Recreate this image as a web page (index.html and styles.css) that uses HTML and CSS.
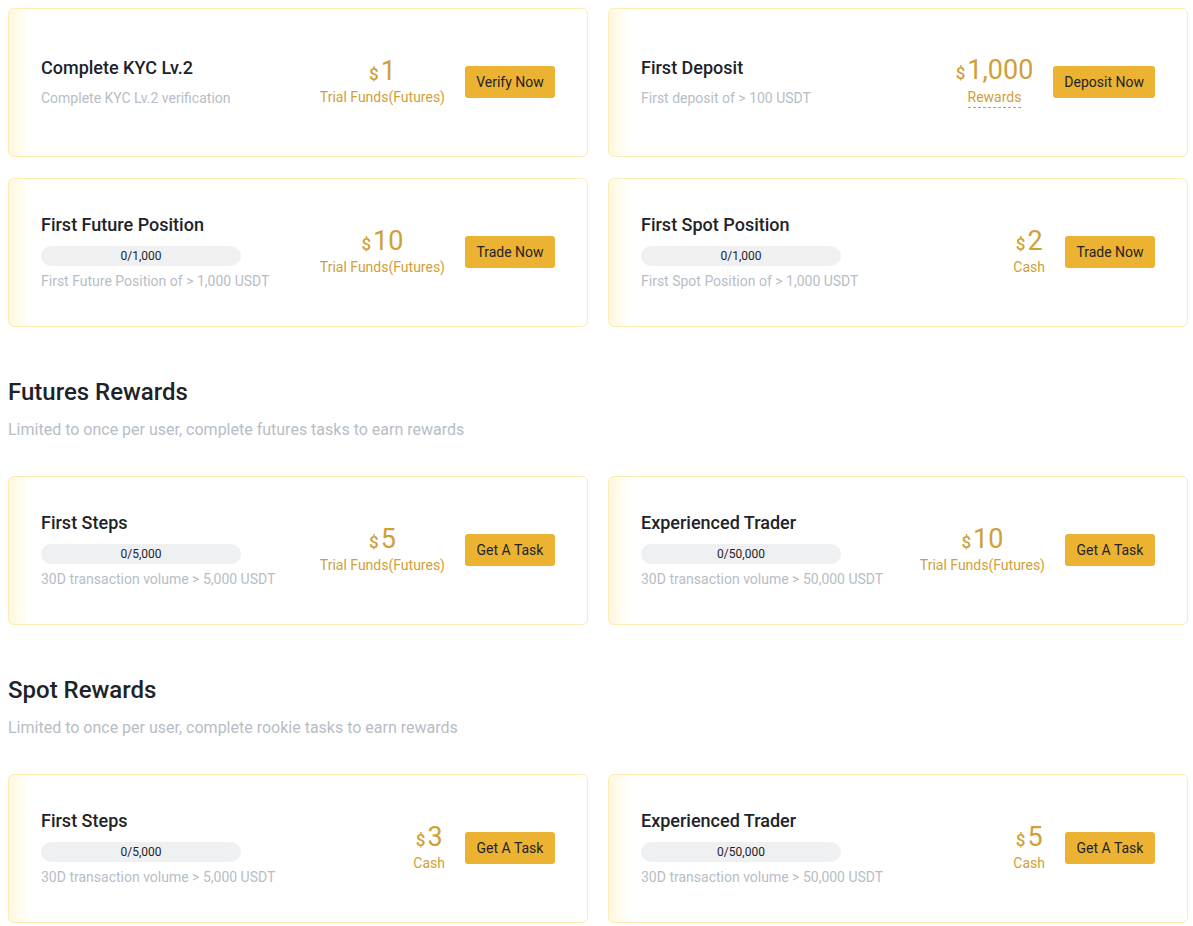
FILE: index.html
```html
<!DOCTYPE html>
<html>
<head>
<meta charset="utf-8">
<link rel="stylesheet" href="styles.css">
</head>
<body>
<div class="page">
  <div class="grid">
    <div class="card">
      <div class="info">
        <div class="title">Complete KYC Lv.2</div>
        <div class="desc">Complete KYC Lv.2 verification</div>
      </div>
      <div class="reward"><div class="amount"><span class="cur">$</span>1</div><div class="label">Trial Funds(Futures)</div></div>
      <button class="btn">Verify Now</button>
    </div>
    <div class="card">
      <div class="info">
        <div class="title">First Deposit</div>
        <div class="desc">First deposit of &gt; 100 USDT</div>
      </div>
      <div class="reward"><div class="amount"><span class="cur">$</span>1,000</div><div class="label dashed">Rewards</div></div>
      <button class="btn">Deposit Now</button>
    </div>
    <div class="card">
      <div class="info">
        <div class="title">First Future Position</div>
        <div class="bar">0/1,000</div>
        <div class="desc">First Future Position of &gt; 1,000 USDT</div>
      </div>
      <div class="reward"><div class="amount"><span class="cur">$</span>10</div><div class="label">Trial Funds(Futures)</div></div>
      <button class="btn">Trade Now</button>
    </div>
    <div class="card">
      <div class="info">
        <div class="title">First Spot Position</div>
        <div class="bar">0/1,000</div>
        <div class="desc">First Spot Position of &gt; 1,000 USDT</div>
      </div>
      <div class="reward"><div class="amount"><span class="cur">$</span>2</div><div class="label">Cash</div></div>
      <button class="btn">Trade Now</button>
    </div>
  </div>

  <div class="section-head">
    <h2 class="section-title">Futures Rewards</h2>
    <p class="section-sub">Limited to once per user, complete futures tasks to earn rewards</p>
  </div>
  <div class="grid">
    <div class="card">
      <div class="info">
        <div class="title">First Steps</div>
        <div class="bar">0/5,000</div>
        <div class="desc">30D transaction volume &gt; 5,000 USDT</div>
      </div>
      <div class="reward"><div class="amount"><span class="cur">$</span>5</div><div class="label">Trial Funds(Futures)</div></div>
      <button class="btn">Get A Task</button>
    </div>
    <div class="card">
      <div class="info">
        <div class="title">Experienced Trader</div>
        <div class="bar">0/50,000</div>
        <div class="desc">30D transaction volume &gt; 50,000 USDT</div>
      </div>
      <div class="reward"><div class="amount"><span class="cur">$</span>10</div><div class="label">Trial Funds(Futures)</div></div>
      <button class="btn">Get A Task</button>
    </div>
  </div>

  <div class="section-head">
    <h2 class="section-title">Spot Rewards</h2>
    <p class="section-sub">Limited to once per user, complete rookie tasks to earn rewards</p>
  </div>
  <div class="grid">
    <div class="card">
      <div class="info">
        <div class="title">First Steps</div>
        <div class="bar">0/5,000</div>
        <div class="desc">30D transaction volume &gt; 5,000 USDT</div>
      </div>
      <div class="reward"><div class="amount"><span class="cur">$</span>3</div><div class="label">Cash</div></div>
      <button class="btn">Get A Task</button>
    </div>
    <div class="card">
      <div class="info">
        <div class="title">Experienced Trader</div>
        <div class="bar">0/50,000</div>
        <div class="desc">30D transaction volume &gt; 50,000 USDT</div>
      </div>
      <div class="reward"><div class="amount"><span class="cur">$</span>5</div><div class="label">Cash</div></div>
      <button class="btn">Get A Task</button>
    </div>
  </div>
</div>
</body>
</html>
```

FILE: styles.css
```css
* { box-sizing: border-box; }
html, body { margin: 0; padding: 0; background: #fff; }
body {
  font-family: Roboto, "Liberation Sans", Arial, sans-serif;
  color: #1e2329;
}
.page { padding: 8px 0 0 8px; }
.grid {
  display: grid;
  grid-template-columns: 580px 580px;
  column-gap: 20px;
  row-gap: 21px;
}
.card {
  height: 149px;
  border: 1px solid #fcebb2;
  border-radius: 6px;
  background: linear-gradient(90deg, #fff8de 0px, #ffffff 22px);
  display: flex;
  align-items: center;
  padding: 0 32px 2px 32px;
}
.info { flex: 1; min-width: 0; }
.title {
  font-size: 18px;
  line-height: 24px;
  font-weight: 500;
  color: #1e2329;
}
.desc {
  font-size: 14px;
  line-height: 18px;
  color: #b7bdc6;
  margin-top: 9px;
}
.bar {
  width: 200px;
  height: 20px;
  border-radius: 10px;
  background: #eef0f2;
  margin-top: 9px;
  font-size: 12px;
  line-height: 20px;
  text-align: center;
  color: #1e2329;
}
.bar + .desc { margin-top: 6px; }
.reward {
  text-align: center;
  color: #d0a038;
  margin-right: 20px;
}
.amount {
  font-size: 27px;
  line-height: 28px;
  font-weight: 400;
}
.cur { font-size: 17px; font-weight: 500; margin-right: 2px; }
.label {
  font-size: 14px;
  line-height: 18px;
  margin-top: 0;
}
.dashed {
  display: inline-block;
  border-bottom: 1px dashed #d0a038;
  padding-bottom: 1px;
}
.btn {
  font-family: inherit;
  height: 32px;
  padding: 0 11px;
  min-width: 90px;
  border: none;
  border-radius: 3px;
  background: #ecb231;
  color: #1e2329;
  font-size: 14px;
  cursor: pointer;
}
.section-head { padding-top: 49px; padding-bottom: 34px; }
.section-title {
  margin: 0;
  font-size: 24px;
  line-height: 32px;
  font-weight: 500;
  color: #1e2329;
}
.section-sub {
  margin: 10px 0 0 0;
  font-size: 16px;
  line-height: 24px;
  color: #b7bdc6;
}
```
